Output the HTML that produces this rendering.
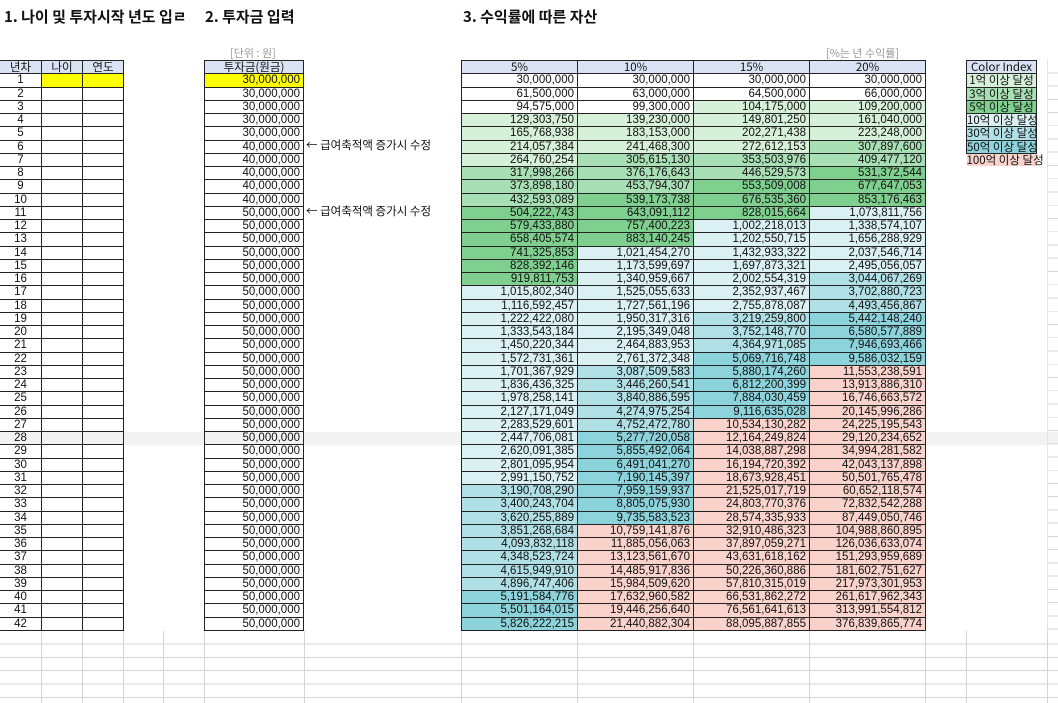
<!DOCTYPE html>
<html><head><meta charset="utf-8">
<style>
body{margin:0;width:1058px;height:703px;overflow:hidden;background:#fff;position:relative;font-family:"Liberation Sans","Noto Sans CJK KR",sans-serif;color:#111}
.t{position:absolute;font-weight:bold;font-size:15px;top:6px;font-family:"Noto Sans CJK KR","Liberation Sans",sans-serif}
.note{position:absolute;font-size:11px;color:#999;font-family:"Noto Sans CJK KR",sans-serif}
table{position:absolute;border-collapse:collapse;table-layout:fixed;top:60px}
td{border:1px solid #222;height:12.25px;padding:0 3px;font-size:11.5px;line-height:12px;white-space:nowrap;overflow:hidden;text-align:right}
th{border:1px solid #222;height:12.25px;padding:0;font-size:11.5px;line-height:12px;font-weight:normal;background:#dae3f3;font-family:"Noto Sans CJK KR",sans-serif;text-align:center}
.c{text-align:center}
.y{background:#ffff00}
.c1{background:#d6f0da}.c2{background:#a9dfb5}.c3{background:#7fd08f}
.c4{background:#daf0f3}.c5{background:#b0e0e6}.c6{background:#8dd3dc}.c7{background:#f9d2cc}
.ann{position:absolute;left:306px;font-size:11.5px;font-family:"Noto Sans CJK KR",sans-serif;line-height:13px}
.grid{position:absolute;left:0;top:631px;width:1058px;height:72px;background:repeating-linear-gradient(to bottom,transparent 0,transparent 12.4px,#d4d4d4 12.4px,#d4d4d4 13.4px)}
.vl{position:absolute;top:631px;height:72px;width:1px;background:#d4d4d4}
.band{position:absolute;left:0;width:1058px;top:432px;height:13.3px;background:#f1f2f1}
.rg{position:absolute;left:1047px;width:11px;top:60px;height:571px;background:repeating-linear-gradient(to bottom,transparent 0,transparent 12.25px,#d4d4d4 12.25px,#d4d4d4 13.25px);border-left:1px solid #e4e4e4}
#ci td{font-family:"Noto Sans CJK KR",sans-serif;text-align:center;padding:0;font-size:11.5px}
</style></head><body>
<div class="band"></div>
<div class="rg"></div>
<div class="grid"></div>
<div class="vl" style="left:41px"></div><div class="vl" style="left:82px"></div><div class="vl" style="left:123px"></div><div class="vl" style="left:163px"></div><div class="vl" style="left:204px"></div><div class="vl" style="left:304px"></div><div class="vl" style="left:461px"></div><div class="vl" style="left:577px"></div><div class="vl" style="left:693px"></div><div class="vl" style="left:809px"></div><div class="vl" style="left:925px"></div><div class="vl" style="left:966px"></div><div class="vl" style="left:1047px"></div>

<div class="t" style="left:4px">1. 나이 및 투자시작 년도 입ㄹ</div>
<div class="t" style="left:205px">2. 투자금 입력</div>
<div class="t" style="left:463px">3. 수익률에 따른 자산</div>
<div class="note" style="left:230px;top:45px">[단위 : 원]</div>
<div class="note" style="left:826px;top:45px">[%는 년 수익률]</div>
<div class="ann" style="top:139px">← 급여축적액 증가시 수정</div>
<div class="ann" style="top:205px">← 급여축적액 증가시 수정</div>

<table style="left:-1px;width:124px"><colgroup><col style="width:42px"><col style="width:41px"><col style="width:41px"></colgroup>
<tr><th>년차</th><th>나이</th><th>연도</th></tr>
<tbody id="lt"></tbody></table>

<table style="left:204px;width:100px"><tr><th>투자금(원금)</th></tr><tbody id="it"></tbody></table>

<table style="left:461px;width:464px"><colgroup><col style="width:116px"><col style="width:116px"><col style="width:116px"><col style="width:116px"></colgroup>
<tr><th>5%</th><th>10%</th><th>15%</th><th>20%</th></tr>
<tbody id="rt">
<tr><td>30,000,000</td><td>30,000,000</td><td>30,000,000</td><td>30,000,000</td></tr>
<tr><td>61,500,000</td><td>63,000,000</td><td>64,500,000</td><td>66,000,000</td></tr>
<tr><td>94,575,000</td><td>99,300,000</td><td>104,175,000</td><td>109,200,000</td></tr>
<tr><td>129,303,750</td><td>139,230,000</td><td>149,801,250</td><td>161,040,000</td></tr>
<tr><td>165,768,938</td><td>183,153,000</td><td>202,271,438</td><td>223,248,000</td></tr>
<tr><td>214,057,384</td><td>241,468,300</td><td>272,612,153</td><td>307,897,600</td></tr>
<tr><td>264,760,254</td><td>305,615,130</td><td>353,503,976</td><td>409,477,120</td></tr>
<tr><td>317,998,266</td><td>376,176,643</td><td>446,529,573</td><td>531,372,544</td></tr>
<tr><td>373,898,180</td><td>453,794,307</td><td>553,509,008</td><td>677,647,053</td></tr>
<tr><td>432,593,089</td><td>539,173,738</td><td>676,535,360</td><td>853,176,463</td></tr>
<tr><td>504,222,743</td><td>643,091,112</td><td>828,015,664</td><td>1,073,811,756</td></tr>
<tr><td>579,433,880</td><td>757,400,223</td><td>1,002,218,013</td><td>1,338,574,107</td></tr>
<tr><td>658,405,574</td><td>883,140,245</td><td>1,202,550,715</td><td>1,656,288,929</td></tr>
<tr><td>741,325,853</td><td>1,021,454,270</td><td>1,432,933,322</td><td>2,037,546,714</td></tr>
<tr><td>828,392,146</td><td>1,173,599,697</td><td>1,697,873,321</td><td>2,495,056,057</td></tr>
<tr><td>919,811,753</td><td>1,340,959,667</td><td>2,002,554,319</td><td>3,044,067,269</td></tr>
<tr><td>1,015,802,340</td><td>1,525,055,633</td><td>2,352,937,467</td><td>3,702,880,723</td></tr>
<tr><td>1,116,592,457</td><td>1,727,561,196</td><td>2,755,878,087</td><td>4,493,456,867</td></tr>
<tr><td>1,222,422,080</td><td>1,950,317,316</td><td>3,219,259,800</td><td>5,442,148,240</td></tr>
<tr><td>1,333,543,184</td><td>2,195,349,048</td><td>3,752,148,770</td><td>6,580,577,889</td></tr>
<tr><td>1,450,220,344</td><td>2,464,883,953</td><td>4,364,971,085</td><td>7,946,693,466</td></tr>
<tr><td>1,572,731,361</td><td>2,761,372,348</td><td>5,069,716,748</td><td>9,586,032,159</td></tr>
<tr><td>1,701,367,929</td><td>3,087,509,583</td><td>5,880,174,260</td><td>11,553,238,591</td></tr>
<tr><td>1,836,436,325</td><td>3,446,260,541</td><td>6,812,200,399</td><td>13,913,886,310</td></tr>
<tr><td>1,978,258,141</td><td>3,840,886,595</td><td>7,884,030,459</td><td>16,746,663,572</td></tr>
<tr><td>2,127,171,049</td><td>4,274,975,254</td><td>9,116,635,028</td><td>20,145,996,286</td></tr>
<tr><td>2,283,529,601</td><td>4,752,472,780</td><td>10,534,130,282</td><td>24,225,195,543</td></tr>
<tr><td>2,447,706,081</td><td>5,277,720,058</td><td>12,164,249,824</td><td>29,120,234,652</td></tr>
<tr><td>2,620,091,385</td><td>5,855,492,064</td><td>14,038,887,298</td><td>34,994,281,582</td></tr>
<tr><td>2,801,095,954</td><td>6,491,041,270</td><td>16,194,720,392</td><td>42,043,137,898</td></tr>
<tr><td>2,991,150,752</td><td>7,190,145,397</td><td>18,673,928,451</td><td>50,501,765,478</td></tr>
<tr><td>3,190,708,290</td><td>7,959,159,937</td><td>21,525,017,719</td><td>60,652,118,574</td></tr>
<tr><td>3,400,243,704</td><td>8,805,075,930</td><td>24,803,770,376</td><td>72,832,542,288</td></tr>
<tr><td>3,620,255,889</td><td>9,735,583,523</td><td>28,574,335,933</td><td>87,449,050,746</td></tr>
<tr><td>3,851,268,684</td><td>10,759,141,876</td><td>32,910,486,323</td><td>104,988,860,895</td></tr>
<tr><td>4,093,832,118</td><td>11,885,056,063</td><td>37,897,059,271</td><td>126,036,633,074</td></tr>
<tr><td>4,348,523,724</td><td>13,123,561,670</td><td>43,631,618,162</td><td>151,293,959,689</td></tr>
<tr><td>4,615,949,910</td><td>14,485,917,836</td><td>50,226,360,886</td><td>181,602,751,627</td></tr>
<tr><td>4,896,747,406</td><td>15,984,509,620</td><td>57,810,315,019</td><td>217,973,301,953</td></tr>
<tr><td>5,191,584,776</td><td>17,632,960,582</td><td>66,531,862,272</td><td>261,617,962,343</td></tr>
<tr><td>5,501,164,015</td><td>19,446,256,640</td><td>76,561,641,613</td><td>313,991,554,812</td></tr>
<tr><td>5,826,222,215</td><td>21,440,882,304</td><td>88,095,887,855</td><td>376,839,865,774</td></tr>
</tbody></table>

<table id="ci" style="left:966px;width:71px">
<tr><th>Color Index</th></tr>
<tr><td class="c1">1억 이상 달성</td></tr>
<tr><td class="c2">3억 이상 달성</td></tr>
<tr><td class="c3">5억 이상 달성</td></tr>
<tr><td class="c4">10억 이상 달성</td></tr>
<tr><td class="c5">30억 이상 달성</td></tr>
<tr><td class="c6">50억 이상 달성</td></tr>
<tr><td class="c7" style="border:none;overflow:visible;text-align:left;width:80px">100억 이상 달성</td></tr>
</table>

<script>
var lt=document.getElementById('lt'),it=document.getElementById('it'),h1='',h2='';
for(var i=1;i<=42;i++){
 var y=i==1?' class="y"':'';
 h1+='<tr><td class="c">'+i+'</td><td'+y+'></td><td'+y+'></td></tr>';
 var v=i<=5?'30,000,000':(i<=10?'40,000,000':'50,000,000');
 h2+='<tr><td'+y+'>'+v+'</td></tr>';
}
lt.innerHTML=h1;it.innerHTML=h2;
var th=[1e8,3e8,5e8,1e9,3e9,5e9,1e10];
document.querySelectorAll('#rt td').forEach(function(td){
 var n=parseFloat(td.textContent.replace(/,/g,'')),c=0;
 for(var k=0;k<th.length;k++)if(n>=th[k])c=k+1;
 if(c)td.className='c'+c;
});
</script>
</body></html>
